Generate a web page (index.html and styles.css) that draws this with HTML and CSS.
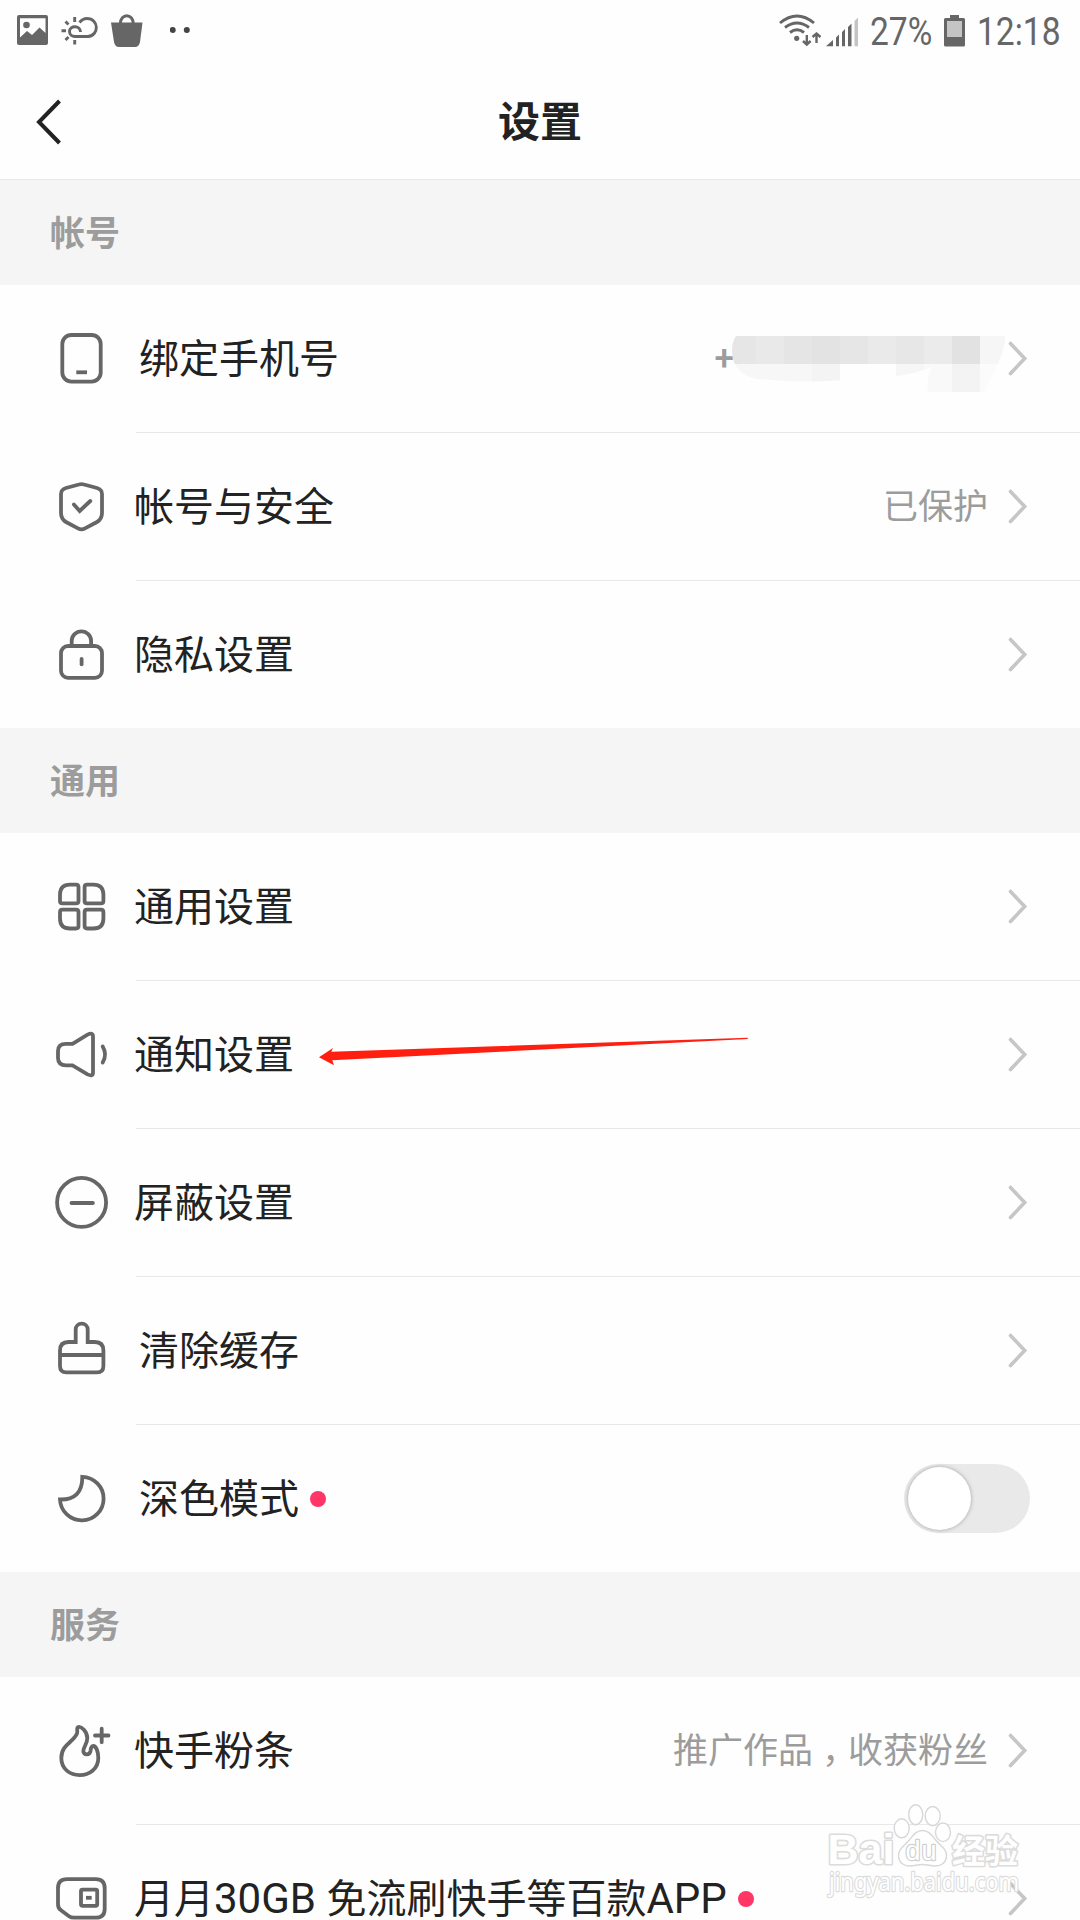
FILE: index.html
```html
<!DOCTYPE html>
<html lang="zh-CN">
<head>
  <meta charset="UTF-8" />
  <meta name="viewport" content="width=device-width, initial-scale=1.0"/>
  <title>设置</title>
  <link rel="stylesheet" href="styles.css">
</head>
<body>
  <!-- Shared chevron -->
  <svg class="defs" width="0" height="0">
    <symbol id="chevron" viewBox="0 0 20 37">
      <path d="M2.500 3.500 16.700 18.500 2.500 33.500" />
    </symbol>
  </svg>

  <!-- Status bar -->
  <div class="status-bar">
    <svg class="st-photo" width="31" height="60" viewBox="17 0 31 60">
      <path fill-rule="evenodd" d="M19 15h27a2 2 0 0 1 2 2v26a2 2 0 0 1-2 2H19a2 2 0 0 1-2-2V17a2 2 0 0 1 2-2zm1 3.2V37.500l7-6.500 5 4 7.500-7.500 6 5.500V18.200z" />
      <circle cx="26.500" cy="25" r="3.300" />
    </svg>
    <svg class="st-weather" width="37" height="60" viewBox="61 0 37 60">
      <g fill="none" stroke="#666" stroke-width="2.900">
        <path d="M80.500 32c0-7-11-7-11-.5 0 3 2.500 5 5.500 5h13c11.500-1 11-18-1-18-3 0-5.500 1.500-7.500 4" />
        <path d="M74.700 17v5M61.500 30.700h4.500M74.700 40v4.500M65.500 21.500l3 3M65.500 40l3-3" />
      </g>
    </svg>
    <svg class="st-bag" width="32" height="60" viewBox="111 0 32 60">
      <path d="M111 22.500h31.500L140 42q-1 5-5 5h-16q-4 0-5-5z" />
      <path fill="none" stroke="#666" stroke-width="3" d="M120.300 24c0-11 13-11 13 0" />
    </svg>
    <svg class="st-dots" width="20" height="60" viewBox="170 0 20 60">
      <circle cx="172.700" cy="30" r="3" /><circle cx="186.800" cy="30" r="3" />
    </svg>
    <svg class="st-wifi" width="42" height="60" viewBox="779 0 42 60">
      <g fill="none" stroke="#666" stroke-width="2.900">
        <path d="M780 23q17-14 34 0M785 27.500q12-9 24 0M790 32.500q7-5.500 14 0" />
        <path d="M806.800 35v9M803 41l3.800 3.500 3.800-3.500M816.500 43v-9M812.500 37l4-3.500 4 3.500" stroke-width="2.400" />
      </g>
      <circle cx="796.700" cy="38.300" r="2.600" />
    </svg>
    <svg class="st-signal" width="32" height="60" viewBox="826 0 32 60">
      <path d="M826 46.300l7-6.300v6.300zM836 37.500l3-3v11.800h-3zM842 32l3-3v17.300h-3zM848 27l3.500-3.500v22.800H848z" />
      <path fill="#c4c4c4" d="M854.500 21l3.500-3.500v28.800h-3.500z" />
    </svg>
    <span class="st-percent">27%</span>
    <svg class="st-battery" width="21" height="60" viewBox="944 0 21 60">
      <path d="M950 15h9v3h4.500q1.500 0 1.500 1.500V45q0 1.500-1.500 1.500h-18q-1.500 0-1.500-1.500V19.500q0-1.500 1.500-1.500h4.500z" />
      <path fill="#c4c4c4" d="M947 21h15v16h-15z" />
    </svg>
    <span class="st-time">12:18</span>
  </div>

  <!-- Title bar -->
  <header class="header">
    <svg class="back" width="26" height="46" viewBox="0 0 26 46">
      <path d="M23.500 2 3 23 23.500 44" />
    </svg>
    <h1>设置</h1>
  </header>

  <h2 class="section">帐号</h2>
  <ul class="list">
    <li class="row shifted">
      <svg class="icon" width="61" height="61" viewBox="0 0 61 61">
        <rect x="11.300" y="7" width="38.400" height="46.600" rx="9" />
        <path d="M25.300 44.300h10.700" />
      </svg>
      <span class="label">绑定手机号</span>
      <span class="value phone">+</span>
      <!-- Masked number -->
      <svg class="mask" width="274" height="56" viewBox="0 0 274 56">
        <clipPath id="mask-shape">
          <path d="M4 0C0 6-1 14 1 23 4 34 13 41 23 42.500 50 46 80 46.500 108 44.300V28h56v12q20-2 37-10-7 8-5 26h57q6-14 12-26 6-14 8-24V0z" />
        </clipPath>
        <g clip-path="url(#mask-shape)">
          <rect width="24" height="28" fill="#e6e6e6" />
          <rect x="24" width="28" height="28" fill="#e9e9e9" />
          <rect x="52" width="28" height="28" fill="#e5e5e5" />
          <rect x="80" width="28" height="28" fill="#e3e3e3" />
          <rect x="108" width="28" height="28" fill="#e6e6e6" />
          <rect x="136" width="28" height="28" fill="#eaeaea" />
          <rect x="164" width="28" height="28" fill="#e7e7e7" />
          <rect x="192" width="28" height="28" fill="#ebebeb" />
          <rect x="220" width="28" height="28" fill="#e2e2e2" />
          <rect x="248" width="26" height="28" fill="#f6f6f6" />
          <rect y="28" width="80" height="28" fill="#f7f7f7" />
          <rect x="80" y="28" width="28" height="28" fill="#f4f4f4" />
          <rect x="164" y="28" width="28" height="28" fill="#f6f6f6" />
          <rect x="192" y="28" width="28" height="28" fill="#f9f9f9" />
          <rect x="220" y="28" width="28" height="28" fill="#f3f3f3" />
          <rect x="248" y="28" width="26" height="28" fill="#fbfbfb" />
        </g>
      </svg>
      <svg class="chevron" width="20" height="37"><use href="#chevron" /></svg>
    </li>
    <li class="row">
      <svg class="icon" width="61" height="61" viewBox="0 0 61 61">
        <path d="M28 8.500q2.500-.8 5 0L46 12q5 1.500 5 6v19q0 6-5 9l-12 6.300q-3.500 2-7 0L15 46q-5-3-5-9V18q0-4.500 5-6z" />
        <path class="round" d="M22.900 28.500l5.800 6.500L39.300 25" />
      </svg>
      <span class="label">帐号与安全</span>
      <span class="value">已保护</span>
      <svg class="chevron" width="20" height="37"><use href="#chevron" /></svg>
    </li>
    <li class="row">
      <svg class="icon" width="61" height="61" viewBox="0 0 61 61">
        <rect x="10" y="22" width="41" height="31.800" rx="7" />
        <path d="M20.700 21v-4a9.700 9.700 0 0 1 19.400 0v4" />
        <path class="round" d="M30.600 35v5.300" />
      </svg>
      <span class="label">隐私设置</span>
      <svg class="chevron" width="20" height="37"><use href="#chevron" /></svg>
    </li>
  </ul>

  <h2 class="section">通用</h2>
  <ul class="list">
    <li class="row">
      <svg class="icon" width="61" height="61" viewBox="0 0 61 61">
        <path d="M19 8.600h6q2.500 0 2.500 2.500v13.800q0 2.500-2.500 2.500H11.500Q9 27.400 9 24.900V18.600q0-10 10-10z" />
        <path d="M42.400 8.600h-6.300q-2.500 0-2.500 2.500v13.800q0 2.500 2.500 2.500h13.800q2.500 0 2.500-2.500v-6.300q0-10-10-10z" />
        <path d="M19 52.500h6q2.500 0 2.500-2.500V36.100q0-2.500-2.500-2.500H11.500Q9 33.600 9 36.100v6.400q0 10 10 10z" />
        <path d="M42.400 52.500h-6.300q-2.500 0-2.500-2.500V36.100q0-2.500 2.500-2.500h13.800q2.500 0 2.500 2.500v6.400q0 10-10 10z" />
      </svg>
      <span class="label">通用设置</span>
      <svg class="chevron" width="20" height="37"><use href="#chevron" /></svg>
    </li>
    <li class="row">
      <svg class="icon" width="61" height="61" viewBox="0 0 61 61">
        <path d="M21.500 19.800l15-9.200Q42 8 42 12.500v36q0 4.500-5.500 1.900l-15-9.100H15q-8 0-8-7.300v-7q0-7.200 8-7.200z" />
        <path class="round" d="M51.700 22.500q4.700 8 0 16" />
      </svg>
      <span class="label">通知设置</span>
      <svg class="chevron" width="20" height="37"><use href="#chevron" /></svg>
      <!-- Hand drawn pointer -->
      <svg class="pointer" width="430" height="30" viewBox="0 0 430 30">
        <path d="M0 20.300 14 11l-1.700 3.700L428.700.8V2L13.300 23.300l1.700 5z" />
      </svg>
    </li>
    <li class="row">
      <svg class="icon" width="61" height="61" viewBox="0 0 61 61">
        <circle cx="30.600" cy="30.400" r="24.500" />
        <path class="round" d="M20.500 31h21.400" />
      </svg>
      <span class="label">屏蔽设置</span>
      <svg class="chevron" width="20" height="37"><use href="#chevron" /></svg>
    </li>
    <li class="row shifted">
      <svg class="icon" width="61" height="61" viewBox="0 0 61 61">
        <path d="M24.700 24V9.600a6 6 0 0 1 12 0V24" />
        <path d="M26 22h-8.500Q9 22 9 30.500V46q0 6.400 6.400 6.400H46q6.400 0 6.400-6.400V30.500q0-8.500-8.500-8.500h-8.500M9 35h43.400" />
      </svg>
      <span class="label">清除缓存</span>
      <svg class="chevron" width="20" height="37"><use href="#chevron" /></svg>
    </li>
    <li class="row shifted">
      <svg class="icon" width="61" height="61" viewBox="0 0 61 61">
        <path d="M31.300 8.800A21.800 21.800 0 1 1 9 31.500Q31.500 32 31.300 8.800z" />
      </svg>
      <span class="label">深色模式</span>
      <i class="dot"></i>
      <span class="switch"></span>
    </li>
  </ul>

  <h2 class="section">服务</h2>
  <ul class="list">
    <li class="row">
      <svg class="icon" width="61" height="61" viewBox="0 0 61 61">
        <path d="M10.300 38c0-13.500 12-15.500 15.700-24.500 1-3-1-5.500 1.300-6.500 3-.8 9 4.500 9 11.300 0 6-4 8.500-4 12.700 0 4.500 6.500 4.500 7.200 0 .3-3 1.200-5 2.800-5 3 0 5 6 5 12 0 22.500-37 23-37 0z" />
        <path class="round" d="M44 15.500h13.500M50.700 8.700v13.500" />
      </svg>
      <span class="label">快手粉条</span>
      <span class="value">推广作品<span class="comma">，</span>收获粉丝</span>
      <svg class="chevron" width="20" height="37"><use href="#chevron" /></svg>
    </li>
    <li class="row">
      <svg class="icon" width="61" height="61" viewBox="0 0 61 61">
        <path d="M16 11.200h28.700q9 0 9 9v20.500q0 9-9 9H23q-3 0-5-1.500l-8-6q-3-2-3-6v-16q0-9 9-9z" />
        <rect x="30" y="21.600" width="16.200" height="16.200" rx="1.500" />
        <path d="M35 29.800h5.700" />
      </svg>
      <span class="label">月月<span class="latin">30GB </span>免流刷快手等百款<span class="latin">APP</span></span>
      <i class="dot"></i>
      <svg class="chevron" width="20" height="37"><use href="#chevron" /></svg>
    </li>
  </ul>

  <!-- Watermark -->
  <svg class="watermark" width="200" height="100" viewBox="0 0 200 100">
    <text class="wm-bold" x="1.500" y="64" font-size="43" textLength="67" lengthAdjust="spacingAndGlyphs">Bai</text>
    <path d="M96.500 30.500c7 0 10 6 14.500 11s10 8 9.500 15c-.5 6-5 9.500-11 9.500-5 0-8-1.500-13-1.500s-8 1.500-13 1.500c-6 0-10.500-3.500-11-9.500-.5-7 5-10 9.500-15s7.500-11 14.500-11z" />
    <ellipse cx="75.700" cy="28.300" rx="7.500" ry="9.500" />
    <ellipse cx="89.700" cy="14.700" rx="7" ry="10" />
    <ellipse cx="106.700" cy="16" rx="7.500" ry="9.500" />
    <ellipse cx="117" cy="32.300" rx="7.500" ry="9.300" />
    <text class="wm-du" x="79.500" y="60" font-size="27" textLength="31">du</text>
    <text class="wm-cjk" x="126" y="62.500" font-size="33">经验</text>
    <text class="wm-url" x="3" y="90.500" font-size="24.500" textLength="190" lengthAdjust="spacingAndGlyphs">jingyan.baidu.com</text>
  </svg>
</body>
</html>
```
FILE: styles.css
```css
* {
  margin: 0;
  padding: 0;
  box-sizing: border-box;
}

body {
  position: relative;
  width: 1080px;
  height: 1920px;
  overflow: hidden;
  background-color: #fefefe;
  color: #222;
  font-family: Roboto, 'Noto Sans CJK SC', sans-serif;
}

.defs {
  position: absolute;
}

/* Status bar */
.status-bar {
  display: flex;
  height: 64px;
  padding-left: 17px;
  color: #666;
  fill: #666;
  font-size: 39px;
  line-height: 65px;
}

.st-weather {
  margin-left: 13px;
}

.st-bag {
  margin-left: 13px;
}

.st-dots {
  margin-left: 27px;
  fill: #444;
}

.st-wifi {
  margin-left: 589px;
}

.st-signal {
  margin-left: 5px;
}

.st-percent,
.st-time {
  transform: scaleX(0.86);
  transform-origin: left;
}

.st-percent {
  width: 74px;
  margin-left: 12px;
}

.st-time {
  margin-left: 12px;
}

/* Title bar */
.header {
  display: flex;
  align-items: center;
  height: 116px;
  padding: 0 36px;
  border-bottom: 1px solid #e8e8e8;
}

.back {
  fill: none;
  stroke: #222;
  stroke-width: 4;
}

h1 {
  flex: 1;
  margin-right: 26px;
  padding-top: 2px;
  font-size: 42px;
  font-weight: 700;
  line-height: 60px;
  text-align: center;
}

/* Lists */
.section {
  height: 105px;
  padding-left: 50px;
  background-color: #f5f5f5;
  color: #9c9c9c;
  font-size: 35px;
  font-weight: 700;
  line-height: 110px;
}

.list {
  list-style: none;
}

.row {
  position: relative;
  display: flex;
  align-items: center;
  height: 148px;
  padding: 0 52px 1px 51px;
}

.row:last-child {
  height: 147px;
  padding-bottom: 0;
}

/* Separator starts under the label */
.row:not(:last-child)::after {
  content: '';
  position: absolute;
  left: 136px;
  right: 0;
  bottom: 0;
  height: 1px;
  background-color: #e8e8e8;
}

.icon {
  flex: none;
  fill: none;
  stroke: #666;
  stroke-width: 3.8;
}

.icon .round {
  stroke-linecap: round;
}

.label {
  margin-left: 22px;
  padding-top: 2px;
  font-size: 40px;
  line-height: 60px;
  white-space: nowrap;
}

.shifted .label {
  margin-left: 27px;
}

.latin {
  font-size: 42px;
}

.value {
  margin-left: auto;
  padding-top: 2px;
  color: #9c9c9c;
  font-size: 35px;
  line-height: 52px;
  white-space: nowrap;
}

.phone {
  padding-top: 0;
  font-weight: 500;
}

.comma {
  display: inline-block;
  transform: translateX(9px);
}

.mask {
  margin: 11px 2px 0 -2px;
}

.chevron {
  flex: none;
  margin-left: auto;
  fill: none;
  stroke: #c6c6c6;
  stroke-width: 3.6;
  stroke-linecap: round;
}

.value + .chevron {
  margin-left: 20px;
}

.mask + .chevron {
  margin-left: 0;
}

.dot {
  width: 16px;
  height: 16px;
  margin-left: 11px;
  border-radius: 50%;
  background-color: #ff3666;
}

.switch {
  width: 126px;
  height: 69px;
  margin-left: auto;
  margin-right: -2px;
  padding: 3px 4px;
  border-radius: 35px;
  background-color: #e9e9e9;
}

.switch::before {
  content: '';
  display: block;
  width: 63px;
  height: 63px;
  border-radius: 50%;
  background-color: #fff;
  box-shadow: 0 0 4px rgba(0, 0, 0, 0.3);
}

/* Overlays */
.pointer {
  position: absolute;
  left: 319px;
  top: 56px;
  fill: #ff1f10;
}

.watermark {
  position: absolute;
  left: 826px;
  top: 1800px;
  fill: #fff;
  stroke: #d8d8d8;
  stroke-width: 1.4;
  font-family: 'Liberation Sans', sans-serif;
}

/* Outline goes behind the white letters */
.watermark text {
  paint-order: stroke;
  stroke: #dcdcdc;
  stroke-width: 3.2;
  stroke-linejoin: round;
}

.watermark .wm-bold {
  font-weight: 700;
}

.watermark .wm-du {
  stroke: #d0d0d0;
  stroke-width: 2.4;
}

.watermark .wm-cjk {
  font-family: 'Noto Sans CJK SC', sans-serif;
  font-weight: 700;
}

.watermark .wm-url {
  font-family: 'Noto Sans', sans-serif;
  stroke-width: 2.4;
}
```
